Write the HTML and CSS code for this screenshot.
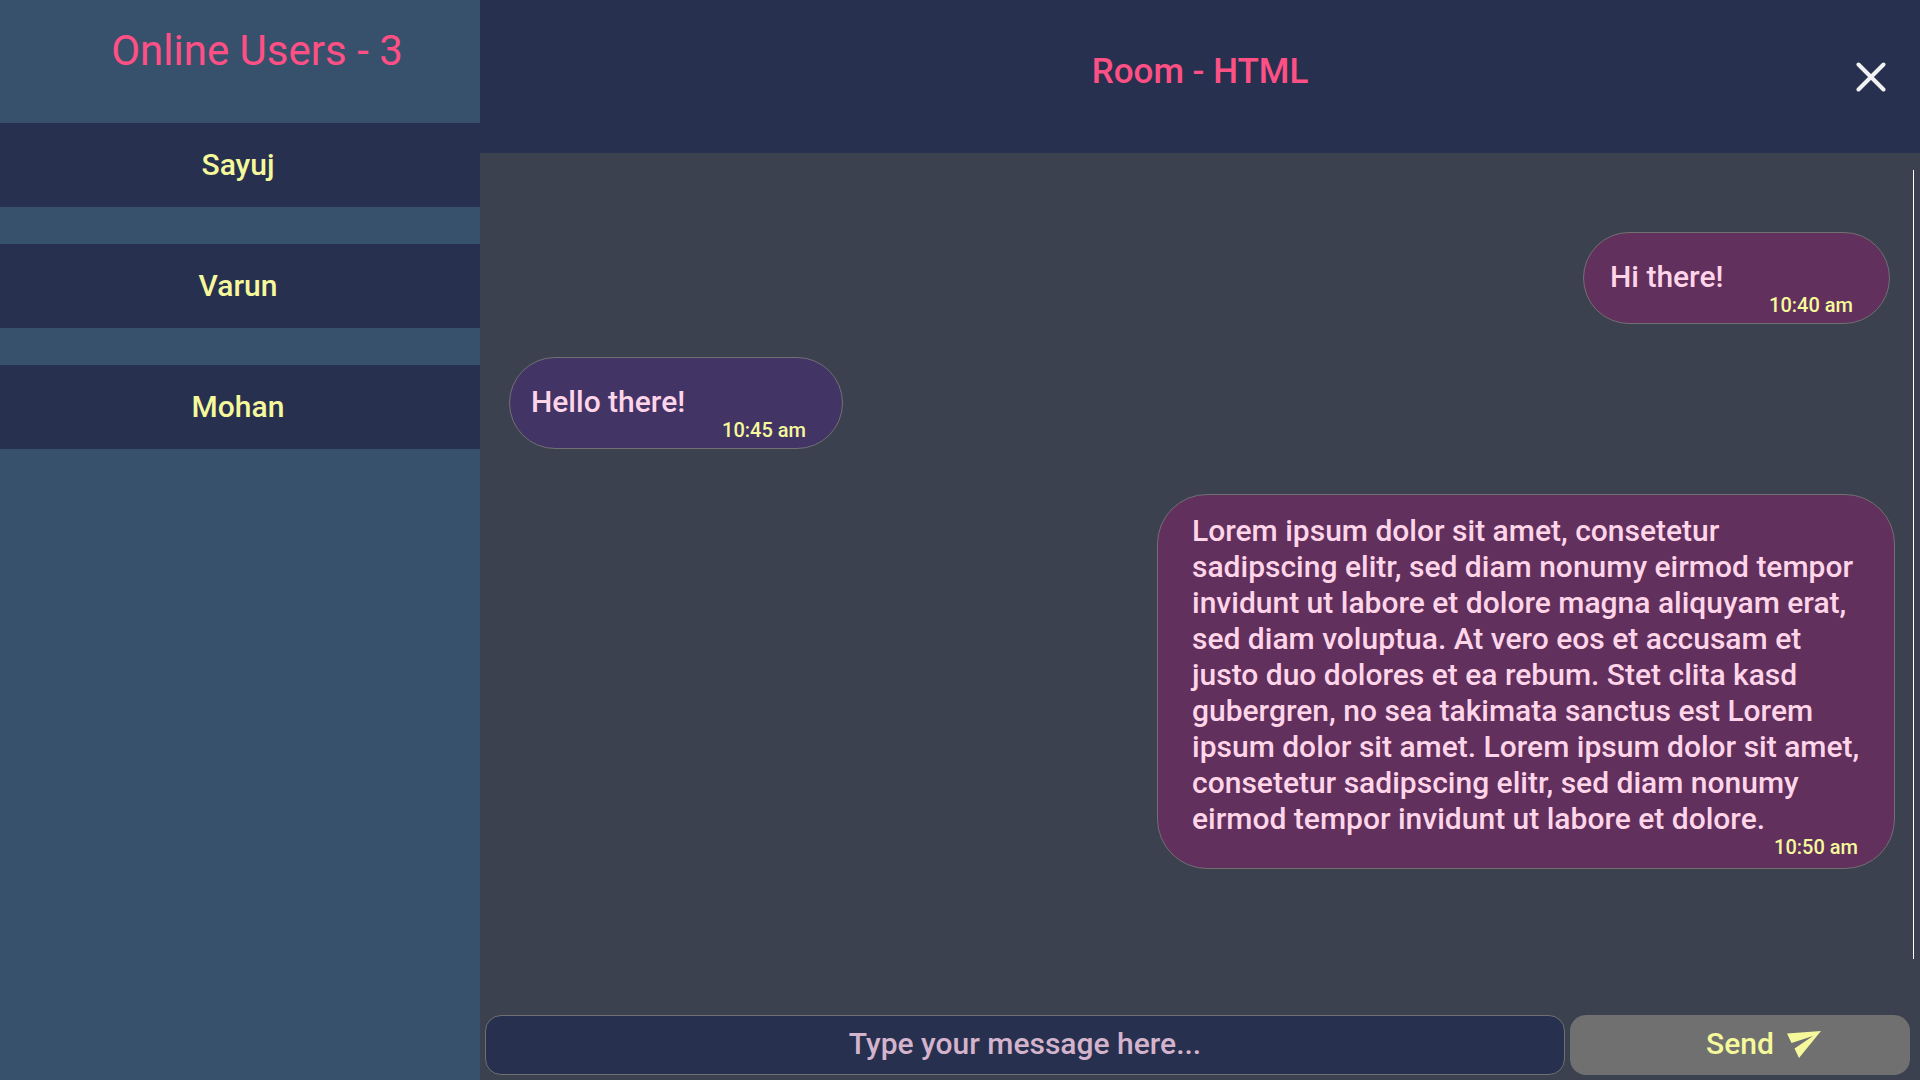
FILE: index.html
```html
<!DOCTYPE html>
<html lang="en">
<head>
<meta charset="utf-8">
<title>Room - HTML</title>
<link rel="stylesheet" href="styles.css">
</head>
<body>
<aside class="sidebar">
  <h2 class="sidebar-title">Online Users - 3</h2>
  <ul class="users">
    <li class="user">Sayuj</li>
    <li class="user">Varun</li>
    <li class="user">Mohan</li>
  </ul>
</aside>
<main class="room">
  <header class="room-header">
    <h1 class="room-title">Room - HTML</h1>
    <button class="close" type="button" aria-label="Leave room">
      <svg width="30" height="30" viewBox="0 0 30 30" aria-hidden="true"><path d="M2.5 2.5L27.5 27.5M27.5 2.5L2.5 27.5" fill="none" stroke="#f2f2f2" stroke-width="4" stroke-linecap="round"/></svg>
    </button>
  </header>
  <section class="messages">
    <article class="message mine">
      <p class="text">Hi there!</p>
      <time class="time">10:40 am</time>
    </article>
    <article class="message theirs">
      <p class="text">Hello there!</p>
      <time class="time">10:45 am</time>
    </article>
    <article class="message mine long">
      <p class="text">Lorem ipsum dolor sit amet, consetetur<br>sadipscing elitr, sed diam nonumy eirmod tempor<br>invidunt ut labore et dolore magna aliquyam erat,<br>sed diam voluptua. At vero eos et accusam et<br>justo duo dolores et ea rebum. Stet clita kasd<br>gubergren, no sea takimata sanctus est Lorem<br>ipsum dolor sit amet. Lorem ipsum dolor sit amet,<br>consetetur sadipscing elitr, sed diam nonumy<br>eirmod tempor invidunt ut labore et dolore.</p>
      <time class="time">10:50 am</time>
    </article>
  </section>
  <form class="composer">
    <input class="composer-input" type="text" placeholder="Type your message here..." aria-label="Message">
    <button class="send" type="button">Send
      <svg width="34" height="27" viewBox="0 0 34 27" aria-hidden="true"><path d="M0 2.5L34 0L12 27L7.5 17.5L26 5L4.5 12Z" fill="#f5f99b"/></svg>
    </button>
  </form>
</main>
</body>
</html>
```
FILE: styles.css
```css
* {
  box-sizing: border-box;
}

body {
  margin: 0;
  min-height: 100vh;
  display: grid;
  grid-template-columns: 1fr 3fr;
  background: #3c4150;
  color: #ffd5e9;
  font: 500 30px/36px Roboto, "Liberation Sans", sans-serif;
}

h1, h2, p, ul {
  margin: 0;
  padding: 0;
}

.sidebar {
  background: #37506b;
}

.sidebar-title {
  margin-bottom: 21px;
  padding-left: 34px;
  color: #ff5086;
  font-size: 42px;
  font-weight: 400;
  line-height: 102px;
  text-align: center;
}

.users {
  display: grid;
  gap: 37px;
  list-style: none;
}

.user {
  padding: 24px 4px 24px 0;
  background: #28304f;
  color: #f5f99b;
  text-align: center;
}

.room {
  display: flex;
  flex-direction: column;
  min-width: 0;
}

.room-header {
  display: grid;
  grid-template-columns: 1fr auto 1fr;
  align-items: center;
  padding: 47px 34px 46px;
  background: #28304f;
}

.room-title {
  grid-column: 2;
  padding-bottom: 10px;
  color: #ff5086;
  font-size: 35px;
  font-weight: 500;
  line-height: 50px;
}

.close {
  justify-self: end;
  display: flex;
  padding: 0;
  border: 0;
  background: none;
}

.messages {
  flex: 1;
  display: flex;
  flex-direction: column;
  align-items: flex-start;
  gap: 33px;
  margin: 17px 6px 56px 0;
  padding: 62px 23px 0 29px;
  border-right: 1px solid #fff;
}

.message {
  display: flex;
  flex-direction: column;
  min-width: 307px;
  padding: 26px 36px 8px 26px;
  border: 1px solid #707070;
  border-radius: 50px;
}

.mine {
  align-self: flex-end;
  background: #61305d;
}

.theirs {
  min-width: 334px;
  padding-left: 21px;
  background: #433466;
}

.long {
  width: 738px;
  margin: 12px -5px 0 0;
  padding: 18px 36px 11px 34px;
}

.text {
  white-space: nowrap;
}

.time {
  align-self: flex-end;
  color: #f5f99b;
  font-size: 20px;
  line-height: 20px;
}

.composer {
  display: grid;
  grid-template-columns: 1080fr 340fr;
  gap: 5px;
  padding: 0 10px 5px 5px;
}

.composer-input {
  min-width: 0;
  height: 60px;
  padding: 0 16px 4px;
  border: 1px solid #707070;
  border-radius: 16px;
  background: #28304f;
  color: #ffd5e9;
  font: inherit;
  text-align: center;
}

.composer-input::placeholder {
  color: #d4b4cc;
  opacity: 1;
}

.send {
  display: flex;
  align-items: center;
  justify-content: center;
  gap: 13px;
  padding: 0 0 2px 47px;
  border: 0;
  border-radius: 16px;
  background: #707070;
  color: #f5f99b;
  font: inherit;
}
```
